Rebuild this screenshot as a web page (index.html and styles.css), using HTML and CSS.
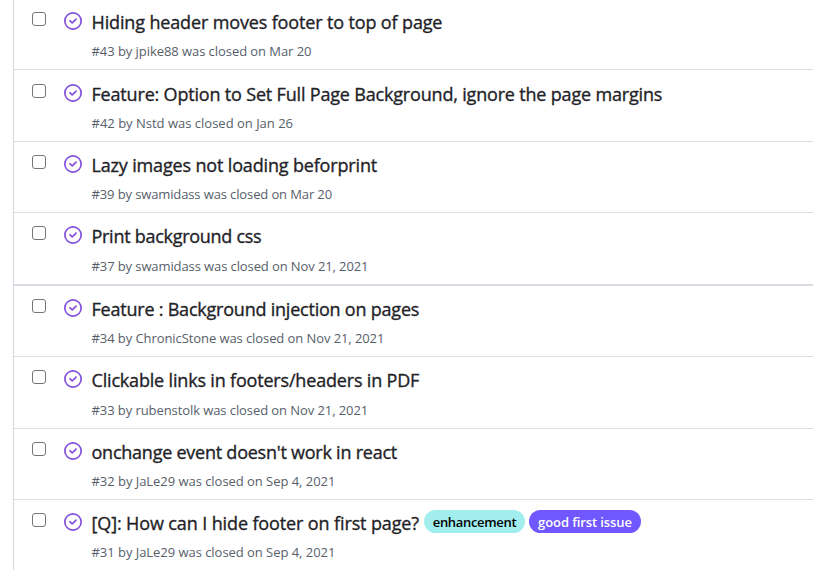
FILE: index.html
```html
<!DOCTYPE html>
<html lang="en">
<head>
<meta charset="utf-8">
<title>Issues</title>
<link rel="stylesheet" href="styles.css">
</head>
<body>
<svg class="defs" aria-hidden="true">
  <symbol id="closed" viewBox="0 0 16 16">
    <path d="M11.28 6.78a.75.75 0 0 0-1.06-1.06L7.25 8.69 5.78 7.22a.75.75 0 0 0-1.06 1.06l2 2a.75.75 0 0 0 1.06 0l3.5-3.5Z"/>
    <path d="M16 8A8 8 0 1 1 0 8a8 8 0 0 1 16 0Zm-1.5 0a6.5 6.5 0 1 0-13 0 6.5 6.5 0 0 0 13 0Z"/>
  </symbol>
</svg>
<main class="issues">
  <article class="issue first"><span class="check"></span><svg class="icon"><use href="#closed"/></svg>
    <div class="body"><h3 class="title"><span class="name n1">Hiding header moves footer to top of page</span></h3><p class="meta m1">#43 by jpike88 was closed on Mar 20</p></div></article>
  <article class="issue second"><span class="check"></span><svg class="icon"><use href="#closed"/></svg>
    <div class="body"><h3 class="title"><span class="name n2">Feature: Option to Set Full Page Background, ignore the page margins</span></h3><p class="meta m2">#42 by Nstd was closed on Jan 26</p></div></article>
  <article class="issue"><span class="check"></span><svg class="icon"><use href="#closed"/></svg>
    <div class="body"><h3 class="title"><span class="name n3">Lazy images not loading beforprint</span></h3><p class="meta m3">#39 by swamidass was closed on Mar 20</p></div></article>
  <article class="issue loose"><span class="check"></span><svg class="icon"><use href="#closed"/></svg>
    <div class="body"><h3 class="title"><span class="name n4">Print background css</span></h3><p class="meta m4">#37 by swamidass was closed on Nov 21, 2021</p></div></article>
  <article class="issue thick"><span class="check"></span><svg class="icon"><use href="#closed"/></svg>
    <div class="body"><h3 class="title"><span class="name n5">Feature : Background injection on pages</span></h3><p class="meta m5">#34 by ChronicStone was closed on Nov 21, 2021</p></div></article>
  <article class="issue loose"><span class="check"></span><svg class="icon"><use href="#closed"/></svg>
    <div class="body"><h3 class="title"><span class="name n6">Clickable links in footers/headers in PDF</span></h3><p class="meta m6">#33 by rubenstolk was closed on Nov 21, 2021</p></div></article>
  <article class="issue"><span class="check"></span><svg class="icon"><use href="#closed"/></svg>
    <div class="body"><h3 class="title"><span class="name n7">onchange event doesn't work in react</span></h3><p class="meta m7">#32 by JaLe29 was closed on Sep 4, 2021</p></div></article>
  <article class="issue"><span class="check"></span><svg class="icon"><use href="#closed"/></svg>
    <div class="body"><h3 class="title"><span class="name n8">[Q]: How can I hide footer on first page?</span><span class="label enhancement">enhancement</span><span class="label beginner">good first issue</span></h3><p class="meta m8">#31 by JaLe29 was closed on Sep 4, 2021</p></div></article>
</main>
</body>
</html>
```
FILE: styles.css
```css
* { box-sizing: border-box; }
body { margin: 0; background: #fff; font-family: "Open Sans", "Noto Sans", sans-serif; overflow: hidden; }
.defs { display: none; }
.issues {
  display: grid;
  grid-template-rows: 69px 72px 71px 72px 72px 72px 71px 71px;
  height: 570px;
  margin-left: 13px;
  border-left: 1px solid #d0d7de;
}
.issue {
  display: flex;
  align-items: flex-start;
  min-height: 0;
  padding: 13px 0 0 18px;
  border-top: 1px solid #d8dee4;
}
.first { padding-top: 12px; border-top: 0; }
.second { padding-top: 14px; }
.thick { border-top-width: 2px; }
.check { flex: none; width: 14px; height: 14px; border: 1px solid #767676; border-radius: 3px; }
.icon { flex: none; width: 18px; height: 18px; margin-left: 18px; fill: #8250df; }
.body { margin-left: 9.5px; white-space: nowrap; }
.title { display: flex; align-items: flex-start; height: 22px; margin: 0; font-size: 18px; font-weight: 500; line-height: 20px; color: #1f2328; }
.name { flex: none; -webkit-text-stroke: 0.35px #1f2328; }
.meta { height: 18px; margin: 8px 0 0; font-size: 13px; line-height: 18px; color: #57606a; }
.loose .meta { margin-top: 9px; }
.label { flex: none; height: 23px; margin-top: -3px; border-radius: 12px; font-size: 13px; font-weight: 600; line-height: 24px; text-align: center; }
.enhancement { width: 101px; background: #a2eeef; color: #000; letter-spacing: -0.33px; }
.beginner { width: 112px; margin-left: 4px; background: #7057ff; color: #fff; letter-spacing: -0.1px; }

/* Title and meta tracking */
.n1 { letter-spacing: -0.14px; }
.n2 { letter-spacing: -0.18px; }
.n3 { letter-spacing: -0.16px; }
.n4 { letter-spacing: -0.28px; }
.n5 { letter-spacing: -0.22px; }
.n6 { letter-spacing: -0.18px; }
.n7 { letter-spacing: -0.24px; }
.n8 { width: 332.5px; letter-spacing: -0.12px; }
.m1 { letter-spacing: -0.06px; }
.m3 { letter-spacing: -0.12px; }
.m4 { letter-spacing: -0.1px; }
.m5 { letter-spacing: -0.08px; }
.m6 { letter-spacing: -0.08px; }
.m7, .m8 { letter-spacing: -0.04px; }
```
